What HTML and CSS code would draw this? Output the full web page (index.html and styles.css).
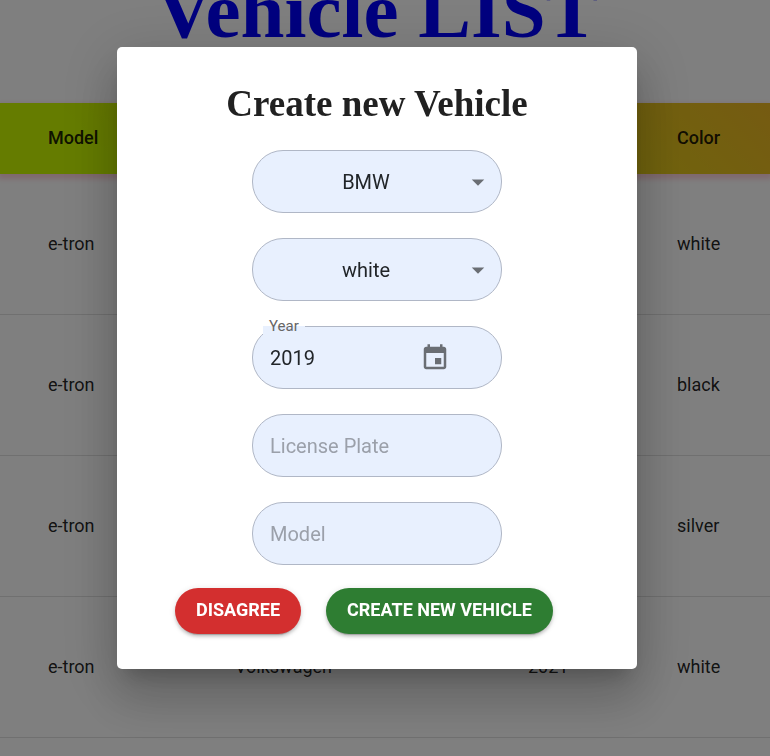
FILE: index.html
```html
<!DOCTYPE html>
<html lang="en">
<head>
<meta charset="utf-8">
<title>Vehicle LIST</title>
<link rel="stylesheet" href="styles.css">
</head>
<body>
<main class="page">
  <h1 class="page-title">Vehicle LIST</h1>
  <table class="vehicles">
    <thead>
      <tr><th class="col-model">Model</th><th class="col-brand">Brand</th><th class="col-year">Year</th><th class="col-color">Color</th></tr>
    </thead>
    <tbody>
      <tr><td>e-tron</td><td>Volkswagen</td><td>2021</td><td>white</td></tr>
      <tr><td>e-tron</td><td>Volkswagen</td><td>2021</td><td>black</td></tr>
      <tr><td>e-tron</td><td>Volkswagen</td><td>2021</td><td>silver</td></tr>
      <tr><td>e-tron</td><td>Volkswagen</td><td>2021</td><td>white</td></tr>
    </tbody>
  </table>
</main>
<div class="backdrop">
  <form class="dialog" role="dialog" aria-modal="true" aria-labelledby="dialog-title">
    <h2 class="dialog-title" id="dialog-title">Create new Vehicle</h2>
    <div class="fields">
      <div class="field">
        <select class="control select" aria-label="Brand"><option>BMW</option><option>Volkswagen</option></select>
        <svg class="arrow" viewBox="0 0 24 24" aria-hidden="true"><path d="M7 10l5 5 5-5z"/></svg>
      </div>
      <div class="field">
        <select class="control select" aria-label="Color"><option>white</option><option>black</option><option>silver</option></select>
        <svg class="arrow" viewBox="0 0 24 24" aria-hidden="true"><path d="M7 10l5 5 5-5z"/></svg>
      </div>
      <div class="field">
        <label class="label" for="year">Year</label>
        <input class="control" id="year" type="text" value="2019">
        <button class="calendar" type="button" aria-label="Choose date"><svg viewBox="0 0 24 24" aria-hidden="true"><path d="M17 12h-5v5h5v-5zM16 1v2H8V1H6v2H5c-1.11 0-1.99.9-1.99 2L3 19c0 1.1.89 2 2 2h14c1.1 0 2-.9 2-2V5c0-1.1-.9-2-2-2h-1V1h-2zm3 18H5V8h14v11z"/></svg></button>
      </div>
      <div class="field"><input class="control" type="text" placeholder="License Plate" aria-label="License Plate"></div>
      <div class="field"><input class="control" type="text" placeholder="Model" aria-label="Model"></div>
    </div>
    <div class="actions">
      <button class="button disagree" type="button">DISAGREE</button>
      <button class="button create" type="submit">CREATE NEW VEHICLE</button>
    </div>
  </form>
</div>
</body>
</html>
```
FILE: styles.css
```css
* { box-sizing: border-box; }

body {
  margin: 0;
  height: 100vh;
  overflow: hidden;
  background: #fff;
  color: rgba(0, 0, 0, 0.87);
  font-family: Roboto, "Liberation Sans", sans-serif;
}

.page-title {
  margin: -30px 16px 51px 0;
  color: #00f;
  font: bold 79px/82px "Liberation Serif", serif;
  text-align: center;
}

.vehicles {
  width: 100%;
  table-layout: fixed;
  border-collapse: separate;
  border-spacing: 0;
  font-size: 18px;
  line-height: 24px;
  text-align: left;
}

.vehicles thead {
  background: linear-gradient(45deg, #caf800 15%, #ebb624 100%);
  box-shadow: 0 3px 5px 2px rgba(255, 105, 135, 0.3);
}

.vehicles th { height: 71px; padding: 0 0 2px; font-weight: 500; }
.vehicles td { height: 141px; padding: 0; border-bottom: 1px solid #e0e0e0; }
.vehicles th:first-child,
.vehicles td:first-child { padding-left: 48px; }
.col-model { width: 235px; }
.col-brand { width: 293px; }
.col-year { width: 149px; }

.backdrop {
  position: fixed;
  inset: 0;
  display: flex;
  align-items: center;
  justify-content: center;
  padding: 0 16px 40px 0;
  background: rgba(0, 0, 0, 0.5);
}

.dialog {
  width: 520px;
  max-width: 90%;
  padding: 35px 58px;
  border-radius: 5px;
  background: #fff;
  box-shadow: 0 14px 19px -9px rgba(0, 0, 0, 0.2),
    0 30px 48px 4px rgba(0, 0, 0, 0.14),
    0 11px 58px 10px rgba(0, 0, 0, 0.12);
}

.dialog-title {
  margin: 0 0 25px;
  color: #212121;
  font: bold 37px/43px "Liberation Serif", serif;
  text-align: center;
}

.fields {
  display: flex;
  flex-direction: column;
  align-items: center;
  gap: 25px;
}

.field {
  position: relative;
  display: flex;
  align-items: center;
  width: 250px;
}

.control {
  width: 100%;
  height: 63px;
  margin: 0;
  padding: 0 17px;
  border: 1px solid #b0b7c6;
  border-radius: 31px;
  background: #e8f0fe;
  color: #212529;
  font: 20px/28px Roboto, "Liberation Sans", sans-serif;
}

.control::placeholder { color: #9ba0aa; opacity: 1; }

.select {
  appearance: none;
  padding: 0 39px 0 17px;
  text-align: center;
  text-align-last: center;
}

.arrow {
  position: absolute;
  right: 9px;
  width: 30px;
  height: 30px;
  fill: #6a6e74;
  pointer-events: none;
}

.label {
  position: absolute;
  top: -9px;
  left: 11px;
  padding: 0 6px;
  background: linear-gradient(#fff 9px, #e8f0fe 9px);
  color: #666;
  font-size: 15px;
  line-height: 18px;
}

.calendar {
  position: absolute;
  right: 52px;
  display: flex;
  padding: 0;
  border: 0;
  background: none;
}

.calendar svg { width: 30px; height: 30px; fill: #6a6e74; }

.actions {
  display: flex;
  gap: 25px;
  margin-top: 23px;
}

.button {
  height: 46px;
  padding: 0 21px 2px;
  border: 0;
  border-radius: 23px;
  color: #fff;
  font: 700 18px/24px Roboto, "Liberation Sans", sans-serif;
  box-shadow: 0 4px 1px -3px rgba(0, 0, 0, 0.2),
    0 3px 3px 0 rgba(0, 0, 0, 0.14),
    0 1px 6px 0 rgba(0, 0, 0, 0.12);
}

.disagree { background: #d32f2f; }
.create { background: #2e7d32; }
```
